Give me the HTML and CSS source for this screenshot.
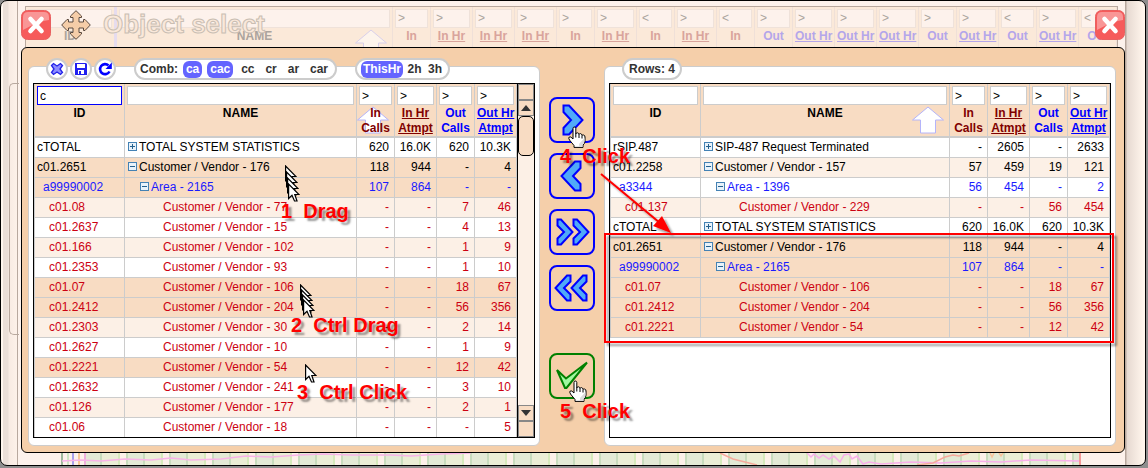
FILE: index.html
```html
<!DOCTYPE html>
<html lang="en">
<head>
    <meta charset="UTF-8">
    <meta name="viewport" content="width=device-width, initial-scale=1.0">
    <title>Object select</title>
    <link rel="stylesheet" href="styles.css">
</head>
<body>
    <!-- shared icons -->
    <svg class="defs" width="0" height="0" aria-hidden="true">
        <symbol id="close" viewBox="0 0 30 30">
            <rect x="0.5" y="0.5" width="29" height="29" rx="6" fill="#f65b5b" stroke="#e86060"/>
            <path d="M2 7Q2 2 7 2H23Q28 2 28 7V10Q18 11 2 20Z" fill="#fff" opacity=".36"/>
            <path d="M9.500 9L20.500 21M20.500 9L9.500 21" stroke="#fff" stroke-width="4.600" stroke-linecap="round"/>
        </symbol>
        <symbol id="sort" viewBox="0 0 34 28">
            <path d="M17 1L32.500 14H24.500V27H9.500V14H1.500Z" fill="#fff" stroke="#b4b4fa"/>
        </symbol>
        <symbol id="pointer" viewBox="0 0 12 19">
            <path d="M.6 1V15.500L4 12.200L6.500 18H9L6.800 11.500H11Z" fill="#fff" stroke="#000" stroke-width="1.200"/>
        </symbol>
        <symbol id="hand" viewBox="0 0 18 22">
            <path d="M5 13V2.500Q5 1 6.300 1T7.800 2.500V8Q8 6.700 9.500 6.800Q10.800 7 11 8.500Q11.300 7.500 12.500 7.600Q13.800 7.800 14 9.500Q14.500 8.800 15.500 9Q17 9.300 17 11V15Q17 17.500 15 19V21.400H6V19.500L1.500 14Q.2 12 1.200 11Q2.500 10 5 13Z" fill="#fff" stroke="#000"/>
            <path d="M11 21V18L16.500 12V15Q16.500 17 14.500 19V21Z" fill="#ddd"/>
            <path d="M7.800 8V11.500M11 8.500V12M14 9.500V12.500" stroke="#000" fill="none"/>
        </symbol>
        <symbol id="right" viewBox="0 0 46 46">
            <path d="M14.500 8.500H20L33.500 23L20 37.500H14.500V31L22 23L14.500 15Z"/>
        </symbol>
        <symbol id="right2" viewBox="0 0 46 46">
            <path d="M8.500 10.500H12L23.500 23L12 35.500H8.500V29.500L15 23L8.500 16.500Z"/>
            <path d="M24.500 10.500H28L39.500 23L28 35.500H24.500V29.500L31 23L24.500 16.500Z"/>
        </symbol>
    </svg>

    <div class="page">
        <div class="backdrop">
            <table class="bg-grid">
                <colgroup>
                    <col class="c-bgid"><col><col class="c-s"><col class="c-l"><col class="c-l"><col class="c-l"><col class="c-s"><col class="c-l"><col class="c-s"><col class="c-l"><col class="c-s"><col class="c-s"><col class="c-l"><col class="c-l"><col class="c-l"><col class="c-s"><col class="c-l"><col class="c-s"><col class="c-l"><col class="c-s">
                </colgroup>
                <tr>
                    <th><span class="box"></span>ID</th>
                    <th><span class="box"></span>NAME<svg class="sort"><use href="#sort"/></svg></th>
                    <th class="in"><span class="box">&gt;</span>In</th>
                    <th class="in"><span class="box">&gt;</span><a href="#">In Hr</a></th>
                    <th class="in"><span class="box">&gt;</span><a href="#">In Hr</a></th>
                    <th class="in"><span class="box">&gt;</span><a href="#">In Hr</a></th>
                    <th class="in"><span class="box">&gt;</span>In</th>
                    <th class="in"><span class="box">&gt;</span><a href="#">In Hr</a></th>
                    <th class="in"><span class="box">&lt;</span>In</th>
                    <th class="in"><span class="box">&gt;</span><a href="#">In Hr</a></th>
                    <th class="in"><span class="box">&lt;</span>In</th>
                    <th class="out"><span class="box">&gt;</span>Out</th>
                    <th class="out"><span class="box">&gt;</span><a href="#">Out Hr</a></th>
                    <th class="out"><span class="box">&gt;</span><a href="#">Out Hr</a></th>
                    <th class="out"><span class="box">&gt;</span><a href="#">Out Hr</a></th>
                    <th class="out"><span class="box">&gt;</span>Out</th>
                    <th class="out"><span class="box">&gt;</span><a href="#">Out Hr</a></th>
                    <th class="out"><span class="box">&lt;</span>Out</th>
                    <th class="out"><span class="box">&gt;</span><a href="#">Out Hr</a></th>
                    <th class="out"><span class="box">&lt;</span>Out</th>
                </tr>
            </table>
        </div>

        <header class="titlebar">
            <button class="close" aria-label="Close"><svg><use href="#close"/></svg></button>
            <svg class="move" viewBox="0 0 30 30">
                <path d="M15 .7L20.500 6V7.500H18V12H22.500V9.500H24L29.300 15L24 20.500H22.500V18H18V22.500H20.500V24L15 29.300L9.500 24V22.500H12V18H7.500V20.500H6L.7 15L6 9.500H7.500V12H12V7.500H9.500V6Z" fill="#f5cda8" stroke="#5a4a40"/>
            </svg>
            <h1>Object select</h1>
            <button class="close" aria-label="Close"><svg><use href="#close"/></svg></button>
        </header>

        <main class="dialog">
            <section class="side">
                <div class="toolbar">
                    <button class="round" aria-label="Clear">
                        <svg viewBox="0 0 18 18"><path d="M3.500 5.500L5.500 3.500L9 6L12.500 3.500L14.500 5.500L12 9L14.500 12.500L12.500 14.500L9 12L5.500 14.500L3.500 12.500L6 9Z" fill="#8c8cff" stroke="#2222e8" stroke-width="1.300"/></svg>
                    </button>
                    <button class="round" aria-label="Save">
                        <svg viewBox="0 0 18 18"><path d="M3 3H14L15 4V15H3Z" fill="#2020f0"/><path d="M5 4H13V8H5ZM6 10H12V14H6Z" fill="#fff"/><path d="M7 11H9V14H7Z" fill="#2020f0"/></svg>
                    </button>
                    <button class="round" aria-label="Reload">
                        <svg viewBox="0 0 18 18"><path d="M13.500 11.500A5 5 0 1 1 12.500 5.500" fill="none" stroke="#00f" stroke-width="2.600"/><path d="M15.800 2.500V9H9.500Z" fill="#00f"/></svg>
                    </button>
                    <div class="pill comb">
                        <span>Comb:</span>
                        <button class="on">ca</button>
                        <button class="on">cac</button>
                        <button>cc</button>
                        <button>cr</button>
                        <button>ar</button>
                        <button>car</button>
                    </div>
                    <div class="pill hours">
                        <button class="on">ThisHr</button>
                        <button>2h</button>
                        <button>3h</button>
                    </div>
                </div>
                <div class="panel">
                    <div class="list">
                        <table class="grid">
                            <colgroup><col class="c-id"><col><col class="c-s"><col class="c-l"><col class="c-s"><col class="c-l"></colgroup>
                            <thead>
                                <tr>
                                    <th><input class="active" type="text" value="c" aria-label="Filter ID">ID</th>
                                    <th><input type="text" aria-label="Filter name">NAME</th>
                                    <th class="in"><svg class="sort"><use href="#sort"/></svg><input type="text" value="&gt;" aria-label="Filter In Calls"><span>In<br>Calls</span></th>
                                    <th class="in"><input type="text" value="&gt;" aria-label="Filter In Hr Atmpt"><a href="#">In Hr<br>Atmpt</a></th>
                                    <th class="out"><input type="text" value="&gt;" aria-label="Filter Out Calls">Out<br>Calls</th>
                                    <th class="out"><input type="text" value="&gt;" aria-label="Filter Out Hr Atmpt"><a href="#">Out Hr<br>Atmpt</a></th>
                                </tr>
                            </thead>
                            <tbody>
                                <tr><td>cTOTAL</td><td><i class="node plus"></i>TOTAL SYSTEM STATISTICS</td><td>620</td><td>16.0K</td><td>620</td><td>10.3K</td></tr>
                                <tr class="sel"><td>c01.2651</td><td><i class="node"></i>Customer / Vendor - 176</td><td>118</td><td>944</td><td>-</td><td>4</td></tr>
                                <tr class="sel area"><td>a99990002</td><td><i class="node"></i>Area - 2165</td><td>107</td><td>864</td><td>-</td><td>-</td></tr>
                                <tr class="leaf"><td>c01.08</td><td>Customer / Vendor - 77</td><td>-</td><td>-</td><td>7</td><td>46</td></tr>
                                <tr class="leaf"><td>c01.2637</td><td>Customer / Vendor - 15</td><td>-</td><td>-</td><td>4</td><td>13</td></tr>
                                <tr class="leaf"><td>c01.166</td><td>Customer / Vendor - 102</td><td>-</td><td>-</td><td>1</td><td>9</td></tr>
                                <tr class="leaf"><td>c01.2353</td><td>Customer / Vendor - 93</td><td>-</td><td>-</td><td>1</td><td>10</td></tr>
                                <tr class="sel leaf"><td>c01.07</td><td>Customer / Vendor - 106</td><td>-</td><td>-</td><td>18</td><td>67</td></tr>
                                <tr class="sel leaf"><td>c01.2412</td><td>Customer / Vendor - 204</td><td>-</td><td>-</td><td>56</td><td>356</td></tr>
                                <tr class="leaf"><td>c01.2303</td><td>Customer / Vendor - 30</td><td>-</td><td>-</td><td>2</td><td>14</td></tr>
                                <tr class="leaf"><td>c01.2627</td><td>Customer / Vendor - 10</td><td>-</td><td>-</td><td>1</td><td>9</td></tr>
                                <tr class="sel leaf"><td>c01.2221</td><td>Customer / Vendor - 54</td><td>-</td><td>-</td><td>12</td><td>42</td></tr>
                                <tr class="leaf white"><td>c01.2632</td><td>Customer / Vendor - 241</td><td>-</td><td>-</td><td>3</td><td>10</td></tr>
                                <tr class="leaf"><td>c01.126</td><td>Customer / Vendor - 177</td><td>-</td><td>-</td><td>2</td><td>1</td></tr>
                                <tr class="leaf"><td>c01.06</td><td>Customer / Vendor - 18</td><td>-</td><td>-</td><td>-</td><td>5</td></tr>
                            </tbody>
                        </table>
                        <div class="scroll">
                            <span class="cap"></span>
                            <button class="cap" aria-label="Scroll up"><svg viewBox="0 0 10 6"><path d="M0 6L5 0L10 6Z"/></svg></button>
                            <span class="thumb"></span>
                            <button class="cap down" aria-label="Scroll down"><svg viewBox="0 0 10 6"><path d="M0 0H10L5 6Z"/></svg></button>
                            <span class="cap"></span>
                        </div>
                    </div>
                </div>
            </section>

            <nav class="moves">
                <button aria-label="Add"><svg><use href="#right"/></svg></button>
                <button class="back" aria-label="Remove"><svg><use href="#right"/></svg></button>
                <button aria-label="Add all"><svg><use href="#right2"/></svg></button>
                <button class="back" aria-label="Remove all"><svg><use href="#right2"/></svg></button>
                <button class="ok" aria-label="Apply">
                    <svg viewBox="0 0 46 46"><path d="M8 17L17 25.500L38 9.500L17.500 35H16Z"/></svg>
                </button>
            </nav>

            <section class="side">
                <div class="toolbar">
                    <div class="pill rows">Rows: 4</div>
                </div>
                <div class="panel">
                    <div class="list">
                        <table class="grid">
                            <colgroup><col class="c-id"><col><col class="c-s"><col class="c-l"><col class="c-s"><col class="c-l"></colgroup>
                            <thead>
                                <tr>
                                    <th><input type="text" aria-label="Filter selected ID">ID</th>
                                    <th><input type="text" aria-label="Filter selected name">NAME<svg class="sort"><use href="#sort"/></svg></th>
                                    <th class="in"><input type="text" value="&gt;" aria-label="Filter selected In Calls">In<br>Calls</th>
                                    <th class="in"><input type="text" value="&gt;" aria-label="Filter selected In Hr Atmpt"><a href="#">In Hr<br>Atmpt</a></th>
                                    <th class="out"><input type="text" value="&gt;" aria-label="Filter selected Out Calls">Out<br>Calls</th>
                                    <th class="out"><input type="text" value="&gt;" aria-label="Filter selected Out Hr Atmpt"><a href="#">Out Hr<br>Atmpt</a></th>
                                </tr>
                            </thead>
                            <tbody>
                                <tr><td>rSIP.487</td><td><i class="node plus"></i>SIP-487 Request Terminated</td><td>-</td><td>2605</td><td>-</td><td>2633</td></tr>
                                <tr><td>c01.2258</td><td><i class="node"></i>Customer / Vendor - 157</td><td>57</td><td>459</td><td>19</td><td>121</td></tr>
                                <tr class="area"><td>a3344</td><td><i class="node"></i>Area - 1396</td><td>56</td><td>454</td><td>-</td><td>2</td></tr>
                                <tr class="leaf"><td>c01.137</td><td>Customer / Vendor - 229</td><td>-</td><td>-</td><td>56</td><td>454</td></tr>
                                <tr><td>cTOTAL</td><td><i class="node plus"></i>TOTAL SYSTEM STATISTICS</td><td>620</td><td>16.0K</td><td>620</td><td>10.3K</td></tr>
                                <tr class="sel"><td>c01.2651</td><td><i class="node"></i>Customer / Vendor - 176</td><td>118</td><td>944</td><td>-</td><td>4</td></tr>
                                <tr class="sel area"><td>a99990002</td><td><i class="node"></i>Area - 2165</td><td>107</td><td>864</td><td>-</td><td>-</td></tr>
                                <tr class="sel leaf"><td>c01.07</td><td>Customer / Vendor - 106</td><td>-</td><td>-</td><td>18</td><td>67</td></tr>
                                <tr class="sel leaf"><td>c01.2412</td><td>Customer / Vendor - 204</td><td>-</td><td>-</td><td>56</td><td>356</td></tr>
                                <tr class="sel leaf"><td>c01.2221</td><td>Customer / Vendor - 54</td><td>-</td><td>-</td><td>12</td><td>42</td></tr>
                            </tbody>
                        </table>
                    </div>
                </div>
            </section>
        </main>

        <svg class="chart" viewBox="0 0 1020 12" preserveAspectRatio="none">
            <defs>
                <pattern id="bars" width="43" height="12" patternUnits="userSpaceOnUse" x="16">
                    <rect width="43" height="12" fill="#ebeed6"/>
                    <path d="M0 0H6V12H0Z" fill="#fdf1ea"/>
                    <path d="M6 0H8V12H6ZM23 0H25V12H23Z" fill="#c8dcbe"/>
                    <path d="M8 0H23V12H8Z" fill="#e3ead6"/>
                    <path d="M41 0H43V12H41Z" fill="#d6eabc"/>
                </pattern>
            </defs>
            <rect x="24" width="994" height="12" fill="url(#bars)"/>
            <path d="M1 0V12" stroke="#9fb89c" stroke-width="2"/>
            <path d="M7 0V12" stroke="#cfe6c4" stroke-width="2"/>
            <path d="M12 0V12" stroke="#a9a0ea" stroke-width="2"/>
            <path d="M18 0V12" stroke="#f8c898" stroke-width="2"/>
            <path d="M24 0V12" stroke="#eeb0dc" stroke-width="2"/>
            <path d="M1 8L20 7L40 8L64 6L90 7L110 5L130 7L160 6L185 3L210 4L238 2L262 1L290 2L330 2L350 3L380 1L410 0" fill="none" stroke="#f8b4e8" stroke-width="1.500"/>
            <path d="M746 0L750 4L753 1L758 5L762 2L768 6L773 3L779 9L783 2L788 1L791 6L796 3L802 11L808 9L820 11L850 9L880 10L910 8L940 9L970 7L1018 8" fill="none" stroke="#f8b0ea" stroke-width="1.500"/>
            <path d="M659 0L672 6L684 9L696 12M856 12L872 10L884 4L892 2L898 3L908 0" fill="none" stroke="#f6aa9c" stroke-width="1.500"/>
            <path d="M929 0L931 4L933 0M938 0L940 3L942 0" fill="none" stroke="#f8c49c" stroke-width="1.500"/>
            <path d="M1019 0V12" stroke="#f49a98" stroke-width="2"/>
        </svg>

        <!-- walkthrough marks over the dialog -->
        <div class="marks">
            <svg class="arrow" viewBox="0 0 1148 468">
                <g filter="url(#shade)" stroke="#f00" fill="none" stroke-width="2">
                    <rect x="605" y="234" width="508" height="108"/>
                    <path d="M601 174L660 223"/>
                    <path d="M671 233L653 226L662 216Z" fill="#f00" stroke="none"/>
                </g>
                <filter id="shade"><feDropShadow dx="3" dy="3" stdDeviation="1" flood-color="#000" flood-opacity=".4"/></filter>
            </svg>
            <svg class="cursor d1"><use href="#pointer"/></svg>
            <svg class="cursor d2"><use href="#pointer"/></svg>
            <svg class="cursor d3"><use href="#pointer"/></svg>
            <svg class="cursor d4"><use href="#pointer"/></svg>
            <svg class="cursor e1"><use href="#pointer"/></svg>
            <svg class="cursor e2"><use href="#pointer"/></svg>
            <svg class="cursor e3"><use href="#pointer"/></svg>
            <svg class="cursor e4"><use href="#pointer"/></svg>
            <svg class="cursor f1"><use href="#pointer"/></svg>
            <svg class="hand h1"><use href="#hand"/></svg>
            <svg class="hand h2"><use href="#hand"/></svg>
            <span class="step s1">1  Drag</span>
            <span class="step s2">2  Ctrl Drag</span>
            <span class="step s3">3  Ctrl Click</span>
            <span class="step s4">4  Click</span>
            <span class="step s5">5  Click</span>
        </div>
    </div>
</body>
</html>
```
FILE: styles.css
```css
* {
    box-sizing: border-box;
}
body {
    margin: 0;
    background-color: #8e8e8e;
    font-family: "Liberation Sans", Arial, sans-serif;
    font-size: 12px;
    color: #000;
}
button {
    padding: 0;
    border: none;
    background: none;
    font: inherit;
    color: inherit;
    cursor: pointer;
}
a {
    color: inherit;
}
.defs {
    position: absolute;
}
.page {
    position: relative;
    margin-right: 2px;
    border: 1px solid #000;
    border-radius: 7px;
    background:
        linear-gradient(90deg, #fff6ee 0 2px, #ebdfd8 2px 7px, #f8ebe3 8px, #fdf1e9 16px, #b8a89e 16px 17px, transparent 17px) left / 20px 100% no-repeat,
        linear-gradient(90deg, #b8a89e 0 1px, #e6d9d1 2px, #fff5ec 18px) right / 20px 100% no-repeat,
        #fdf2ec;
}
/* collapsed tab showing at the left edge */
.page::before {
    content: "";
    position: absolute;
    left: 8px;
    top: 82px;
    width: 9px;
    height: 250px;
    border: 1px solid #b8a89e;
    border-right: none;
    border-radius: 5px 0 0 5px;
}

/* faded page behind the dialog */
.backdrop {
    height: 46px;
    padding: 5px 27px 0 24px;
    overflow: hidden;
}
.bg-grid {
    width: 100%;
    table-layout: fixed;
    border-spacing: 0;
    border: 1px solid #b8a89e;
    border-bottom: none;
    background-color: #fbe9d9;
    color: #aba49e;
}
.bg-grid th {
    position: relative;
    height: 56px;
    padding: 2px;
    border-right: 1px solid #efe0d8;
    vertical-align: top;
    line-height: 15px;
    white-space: nowrap;
}
.bg-grid th:first-child {
    border-right: 3px solid #e6dcee;
}
.bg-grid .in {
    color: #d9a49c;
}
.bg-grid .out {
    color: #b4a6ea;
}
.bg-grid .box {
    display: block;
    height: 19px;
    margin-bottom: 1px;
    padding-left: 2px;
    border: 1px solid #efe2da;
    background-color: #fdf2ec;
    color: #aba49e;
    font-weight: normal;
    line-height: 17px;
    text-align: left;
}
.bg-grid .sort {
    opacity: 0.5;
}
.c-bgid {
    width: 91px;
}
.c-id {
    width: 90px;
}
.c-s {
    width: 38px;
}
.c-l {
    width: 42px;
}

.titlebar {
    position: absolute;
    top: 8px;
    left: 20px;
    right: 20px;
    display: flex;
    align-items: center;
    height: 31px;
}
.titlebar h1 {
    flex: 1;
    margin: 0 0 0 12px;
    font-size: 26px;
    line-height: 31px;
    color: #fae8da;
    -webkit-text-stroke: 1px #c9beb3;
}
.close svg {
    display: block;
    width: 30px;
    height: 30px;
}
.move {
    width: 30px;
    height: 30px;
    margin-left: 10px;
}

.dialog {
    display: flex;
    margin: 0 20px;
    padding: 10px 8px 6px 6px;
    border: 1px solid #000;
    border-radius: 6px;
    background-color: #f5cfaa;
}
.side {
    flex: 1;
    min-width: 0;
}
.toolbar {
    position: relative;
    display: flex;
    height: 22px;
    margin-bottom: -14px;
    padding-left: 18px;
}
.round {
    width: 22px;
    height: 22px;
    margin-right: 2px;
    border: 2px solid #ccc;
    border-radius: 50%;
    background-color: #fff;
}
.round svg {
    display: block;
    width: 18px;
    height: 18px;
}
.pill {
    display: flex;
    align-items: center;
    padding: 0 4px;
    border: 2px solid #ccc;
    border-radius: 11px;
    background-color: #fff;
    color: #333;
    font-weight: bold;
    white-space: nowrap;
}
.comb {
    margin-left: 16px;
    width: 203px;
    justify-content: space-between;
}
.hours {
    margin-left: 18px;
    width: 95px;
    justify-content: space-between;
}
.rows {
    padding: 0 5px;
}
.pill button {
    height: 17px;
    padding: 0 3px;
    border-radius: 6px;
}
.hours button {
    padding: 0 2px;
}
.pill .on {
    background-color: #6464ff;
    color: #fff;
}
.panel {
    padding: 16px 4px 7px;
    border: 1px solid #ccc;
    border-radius: 6px;
    background-color: #fff;
}
.list {
    display: flex;
    align-items: flex-start;
    height: 355px;
    overflow: hidden;
    border: 1px solid #000;
}

.grid {
    flex: 1;
    width: 100%;
    table-layout: fixed;
    border-spacing: 0;
    border-left: 1px solid #ccc;
}
.grid th {
    position: relative;
    height: 54px;
    padding: 2px 2px 0;
    border-right: 1px solid #ccc;
    border-bottom: 2px solid #ccc;
    background-color: #f8dcc3;
    line-height: 15px;
    vertical-align: top;
    white-space: nowrap;
}
.grid input {
    display: block;
    width: 100%;
    height: 19px;
    margin: 0 0 1px;
    padding: 0 2px;
    border: 1px solid #ccc;
    background-color: #fff;
    font: inherit;
    font-weight: normal;
    outline: none;
}
.grid .active {
    border-color: #00f;
}
.grid .in {
    color: #800000;
}
.grid .out {
    color: #00f;
}
.grid th span {
    position: relative;
}
.sort {
    position: absolute;
    right: 4px;
    top: 22px;
    width: 34px;
    height: 28px;
}
.grid td {
    height: 20px;
    padding: 0 5px 1px 2px;
    border-right: 1px solid #ccc;
    border-bottom: 1px solid #ccc;
    line-height: 18px;
    text-align: right;
    vertical-align: top;
    white-space: nowrap;
}
.grid td:nth-child(1),
.grid td:nth-child(2) {
    text-align: left;
}
.grid tbody tr:nth-child(even) {
    background-color: #fcf0e6;
}
.grid tbody tr.sel {
    background-color: #f8dcc3;
}
.grid td:nth-child(2) {
    padding-left: 3px;
}
.area {
    color: #1a1aff;
}
.grid .area td:nth-child(1) {
    padding-left: 8px;
}
.grid .area td:nth-child(2) {
    padding-left: 15px;
}
.leaf {
    color: #cc0011;
}
.grid .leaf td:nth-child(1) {
    padding-left: 14px;
}
.grid .leaf td:nth-child(2) {
    padding-left: 38px;
}
.node {
    display: inline-block;
    width: 9px;
    height: 9px;
    margin-right: 2px;
    border: 1px solid #4482b4;
    background: linear-gradient(#24618f, #24618f) center / 5px 1px no-repeat, #e8f2fa;
}
.node.plus {
    background: linear-gradient(#24618f, #24618f) center / 5px 1px no-repeat, linear-gradient(#24618f, #24618f) center / 1px 5px no-repeat, #e8f2fa;
}

.scroll {
    display: flex;
    flex-direction: column;
    flex: none;
    width: 17px;
    height: 100%;
    border-left: 1px solid #000;
    background-color: #fcf0e6;
}
.cap {
    display: flex;
    align-items: center;
    justify-content: center;
    height: 16px;
    border: 1px solid #888;
    background-color: #f8dcc3;
}
.cap svg {
    width: 10px;
    height: 6px;
    fill: #333;
}
.thumb {
    height: 40px;
    border: 1px solid #000;
    border-radius: 5px;
    background-color: #f8dcc3;
}
.down {
    margin-top: auto;
}

.moves {
    display: flex;
    flex-direction: column;
    align-items: center;
    gap: 10px;
    width: 64px;
    padding: 39px 1px 0 0;
}
.moves button {
    width: 46px;
    height: 46px;
    border: 2px solid #00f;
    border-radius: 8px;
}
.moves svg {
    display: block;
    width: 46px;
    height: 46px;
    margin: -2px;
    fill: #50aaf8;
    stroke: #00f;
    stroke-width: 2px;
}
.moves .back svg {
    transform: scaleX(-1);
}
.moves .ok {
    margin-top: 32px;
    border-color: #008000;
}
.moves .ok svg {
    fill: #a0f8a0;
    stroke: #008000;
}

.chart {
    display: block;
    width: calc(100% - 124px);
    height: 12px;
    margin-left: 60px;
}

.marks {
    position: absolute;
    left: -1px;
    top: -1px;
    pointer-events: none;
}
.marks > * {
    position: absolute;
}
.arrow {
    left: 0;
    top: 0;
    width: 1148px;
    height: 468px;
}
.step {
    color: #f00;
    font-size: 20px;
    font-weight: bold;
    line-height: 20px;
    white-space: pre;
    text-shadow: 3px 3px 2px rgba(0, 0, 0, 0.4);
}
.s1 { left: 281px; top: 201px; }
.s2 { left: 291px; top: 315px; }
.s3 { left: 297px; top: 382px; }
.s4 { left: 560px; top: 146px; }
.s5 { left: 560px; top: 401px; }
.cursor {
    width: 12px;
    height: 19px;
}
.d1 { left: 285px; top: 165px; }
.d2 { left: 286px; top: 171px; }
.d3 { left: 287px; top: 177px; }
.d4 { left: 288px; top: 183px; }
.e1 { left: 300px; top: 284px; }
.e2 { left: 301px; top: 289px; }
.e3 { left: 302px; top: 294px; }
.e4 { left: 303px; top: 299px; }
.f1 { left: 305px; top: 364px; }
.hand {
    width: 18px;
    height: 22px;
}
.h1 { left: 568px; top: 126px; }
.h2 { left: 569px; top: 380px; }
```
